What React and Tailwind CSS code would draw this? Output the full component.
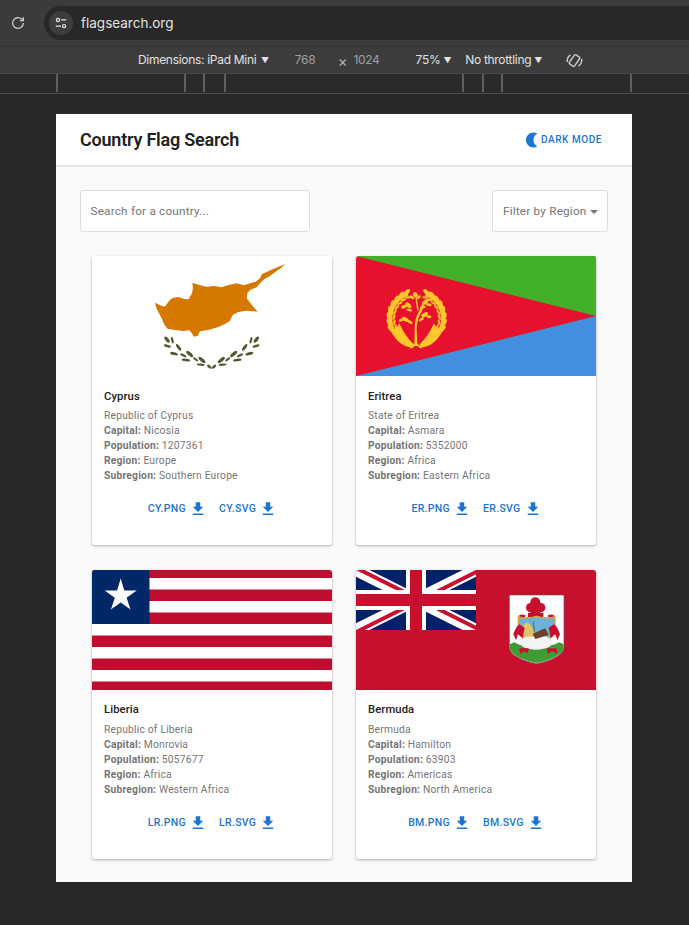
import React from "react";

const countries = [
  { name: "Cyprus", official: "Republic of Cyprus", capital: "Nicosia", population: "1207361", region: "Europe", subregion: "Southern Europe", code: "CY", Flag: CyprusFlag },
  { name: "Eritrea", official: "State of Eritrea", capital: "Asmara", population: "5352000", region: "Africa", subregion: "Eastern Africa", code: "ER", Flag: EritreaFlag },
  { name: "Liberia", official: "Republic of Liberia", capital: "Monrovia", population: "5057677", region: "Africa", subregion: "Western Africa", code: "LR", Flag: LiberiaFlag },
  { name: "Bermuda", official: "Bermuda", capital: "Hamilton", population: "63903", region: "Americas", subregion: "North America", code: "BM", Flag: BermudaFlag },
];

function CyprusLeaves() {
  const leaves = [
    [231, 269, 11, 5, 50], [247, 271, 10, 3.5, 78], [232, 288, 11, 4, 15], [266, 292, 12, 4.5, 55],
    [252, 311, 12, 4.5, 15], [299, 312, 13, 5, 40], [280, 316, 10, 3.5, 30], [288, 330, 13, 4, 8],
    [336, 330, 13, 5, 40], [317, 328, 9, 3.5, 35], [332, 344, 12, 3.5, 5], [358, 350, 8, 4, 40],
  ];
  return (
    <g fill="#4e5b31">
      {leaves.map(([cx, cy, rx, ry, rot], i) => (
        <ellipse key={i} cx={cx} cy={cy} rx={rx} ry={ry} transform={`rotate(${rot} ${cx} ${cy})`} />
      ))}
    </g>
  );
}

function CyprusFlag() {
  return (
    <svg viewBox="6 18 720 360" className="block w-[240px] h-[120px]">
      <rect x="6" y="18" width="720" height="360" fill="#fff" />
      <path
        fill="#d57800"
        d="M586 42 L566 50 L548 58 L530 66 L516 72 L510 85 L497 95 L480 100 L462 106 L440 100 L418 104 L395 112 L372 108 L350 110 L328 105 L307 98 L309 112 L306 130 L296 148 L282 147 L265 141 L250 143 L240 149 L232 160 L224 170 L210 166 L195 158 L198 172 L206 188 L215 205 L222 222 L232 236 L255 240 L280 243 L298 241 L306 250 L311 260 L323 258 L330 244 L355 240 L385 231 L405 222 L420 212 L428 195 L445 186 L470 182 L503 185 L488 168 L470 145 L472 130 L480 120 L500 112 L510 100 L522 88 L540 78 L556 66 L572 55 Z"
      />
      <CyprusLeaves />
      <g transform="translate(730 0) scale(-1 1)">
        <CyprusLeaves />
      </g>
    </svg>
  );
}

// left half of the wreath, t is the angle from the top of the ring
function wreathLeaves() {
  const out = [];
  for (let t = 22; t <= 125; t += 13) {
    const rad = (t * Math.PI) / 180;
    out.push({
      x: 110 - 83 * Math.sin(rad),
      y: 115 - 83 * Math.cos(rad),
      ix: 110 - 68 * Math.sin(rad),
      iy: 115 - 68 * Math.cos(rad),
      r: 160 - t,
      ri: 200 - t,
    });
  }
  return out;
}

function EritreaEmblem() {
  const sprigs = [
    [106, 44, 8, 7, 60], [96, 52, 8, 4, 40], [116, 52, 8, 4, -40],
    [85, 76, 11, 6, 40], [72, 80, 9, 5, -20], [88, 90, 9, 4, 10],
    [136, 66, 11, 6, -40], [146, 74, 9, 4, 10], [128, 82, 9, 4, -10],
    [76, 118, 11, 6, 30], [64, 120, 8, 4, -20], [90, 126, 9, 4, 30],
    [134, 104, 11, 6, -30], [146, 110, 8, 4, 10], [124, 118, 9, 4, -30],
  ];
  return (
    <g fill="#ffc72c">
      <path d="M32 152 Q56 200 100 203 L100 192 Q76 170 58 130 Q50 148 32 152Z" />
      <path d="M188 152 Q164 200 120 203 L120 192 Q144 170 162 130 Q170 148 188 152Z" />
      <path d="M51 164 A76 76 0 0 1 84 44" fill="none" stroke="#ffc72c" strokeWidth="7" />
      <path d="M169 164 A76 76 0 0 0 136 44" fill="none" stroke="#ffc72c" strokeWidth="7" />
      {wreathLeaves().map(({ x, y, ix, iy, r, ri }, i) => (
        <g key={i}>
          <ellipse cx={x} cy={y} rx="14" ry="6" transform={`rotate(${r} ${x} ${y})`} />
          <ellipse cx={220 - x} cy={y} rx="14" ry="6" transform={`rotate(${-r} ${220 - x} ${y})`} />
          <ellipse cx={ix} cy={iy} rx="9" ry="3.5" transform={`rotate(${ri} ${ix} ${iy})`} />
          <ellipse cx={220 - ix} cy={iy} rx="9" ry="3.5" transform={`rotate(${-ri} ${220 - ix} ${iy})`} />
        </g>
      ))}
      <path d="M103 198 L104 150 Q104 118 114 100 Q126 82 128 64 L132 64 Q132 86 120 104 Q110 122 110 150 L112 198Z" />
      <path d="M106 52 L110 52 L116 90 L112 94Z" />
      <path d="M88 205 L107 186 L128 205 L120 205 L108 194 L96 205Z" />
      {sprigs.map(([x, y, rx, ry, r], i) => (
        <ellipse key={i} cx={x} cy={y} rx={rx} ry={ry} transform={`rotate(${r} ${x} ${y})`} />
      ))}
    </g>
  );
}

function EritreaFlag() {
  return (
    <svg viewBox="0 0 240 120" className="block w-[240px] h-[120px]">
      <rect width="240" height="120" fill="#e8112d" />
      <polygon points="0,0 240,0 240,60" fill="#43b02a" />
      <polygon points="0,120 240,120 240,60" fill="#418fde" />
      <g transform="translate(24 24) scale(0.3333)">
        <EritreaEmblem />
      </g>
    </svg>
  );
}

function LiberiaFlag() {
  const h = 11.5;
  return (
    <svg viewBox="0 0 240 120" className="block w-[240px] h-[120px]">
      <rect width="240" height="120" fill="#fff" />
      {[0, 2, 4, 6, 8, 10].map((i) => (
        <rect key={i} y={i * h - 3.5} width="240" height={h} fill="#bf0d2f" />
      ))}
      <rect width="57.5" height="54" fill="#002868" />
      <polygon
        fill="#fff"
        points="28.7,8.5 32.3,20.5 44.7,20.5 34.6,27.8 38.5,39.5 28.7,32.4 18.9,39.5 22.8,27.8 12.7,20.5 25.1,20.5"
      />
    </svg>
  );
}

function BermudaFlag() {
  return (
    <svg viewBox="0 0 240 120" className="block w-[240px] h-[120px]">
      <rect width="240" height="120" fill="#c8102e" />
      <svg x="0" y="0" width="120" height="60" viewBox="0 0 60 30">
        <rect width="60" height="30" fill="#012169" />
        <path d="M0 0L60 30M60 0L0 30" stroke="#fff" strokeWidth="6" />
        <path d="M0 0L30 15M60 30L30 15" stroke="#c8102e" strokeWidth="2" transform="translate(0.9 -0.6)" />
        <path d="M60 0L30 15M0 30L30 15" stroke="#c8102e" strokeWidth="2" transform="translate(0.9 0.6)" />
        <path d="M30 0V30M0 15H60" stroke="#fff" strokeWidth="10" />
        <path d="M30 0V30M0 15H60" stroke="#c8102e" strokeWidth="6" />
      </svg>
      <g transform="translate(144 15) scale(0.3333)">
        <path d="M28 30H192V185Q192 218 110 236Q28 218 28 185Z" fill="#fff" stroke="#555" strokeWidth="2" />
        <path d="M29 178L42 172L60 180L80 175H140L160 180L178 172L191 178V186Q190 216 110 234Q30 216 29 186Z" fill="#3f9c35" />
        <g fill="#c8102e">
          <circle cx="106" cy="52" r="15" />
          <circle cx="92" cy="68" r="14" />
          <circle cx="122" cy="68" r="14" />
          <circle cx="106" cy="78" r="16" />
          <rect x="84" y="84" width="46" height="12" />
          <path d="M55 94Q62 84 78 92L70 100Z" />
          <path d="M165 94Q158 84 142 92L150 100Z" />
        </g>
        <path d="M55 96Q80 102 110 94Q140 102 165 96V130Q150 150 150 170L110 185L70 170Q70 150 55 130Z" fill="#6db3d8" stroke="#d9a62e" strokeWidth="4" />
        <path d="M68 164Q58 122 82 112Q102 120 102 160Z" fill="#e0c468" />
        <path d="M100 110L103 140" stroke="#66605a" strokeWidth="3" />
        <path d="M60 174Q68 150 98 156Q135 146 156 165Q166 190 110 194Q64 192 60 174Z" fill="#f3f3f3" />
        <path d="M98 146L136 130L146 150L106 162Z" fill="#6b4128" />
        <path d="M40 148Q46 128 58 118L74 128L68 160L54 148L48 166Z" fill="#c8102e" />
        <path d="M180 148Q174 128 162 118L146 128L152 160L166 148L172 166Z" fill="#c8102e" />
        <path d="M58 190H86L84 205L72 199L60 206Z" fill="#c8102e" />
        <path d="M140 190H170L172 206L156 199L144 206Z" fill="#c8102e" />
      </g>
    </svg>
  );
}

function DownloadIcon() {
  return (
    <svg viewBox="0 0 24 24" fill="currentColor" className="w-[18px] h-[18px] ml-[3px] mr-[-3px]">
      <path d="M19 9h-4V3H9v6H5l7 7 7-7zM5 18v2h14v-2H5z" />
    </svg>
  );
}

function Fact({ label, value }) {
  return (
    <p>
      <b className="font-bold">{label}:</b> {value}
    </p>
  );
}

function CountryCard({ c }) {
  const { Flag } = c;
  return (
    <div className="bg-white rounded-[3px] overflow-hidden h-[289px] shadow-[0_1px_3px_rgba(0,0,0,0.3)]">
      <Flag />
      <div className="px-3 pt-[12.5px]">
        <h2 className="text-[11.25px] leading-[16px] font-medium tracking-[0.1px] text-[#212121]">{c.name}</h2>
        <div className="mt-[3.5px] text-[10.25px] leading-[15px] tracking-[0.22px] text-[#757575]">
          <p>{c.official}</p>
          <Fact label="Capital" value={c.capital} />
          <Fact label="Population" value={c.population} />
          <Fact label="Region" value={c.region} />
          <Fact label="Subregion" value={c.subregion} />
        </div>
        <div className="mt-[17px] pr-[2px] flex justify-center gap-[15px] text-[#1976d2] text-[10.5px] font-medium tracking-[0.3px]">
          <span className="flex items-center h-[18px]">{c.code}.PNG<DownloadIcon /></span>
          <span className="flex items-center h-[18px]">{c.code}.SVG<DownloadIcon /></span>
        </div>
      </div>
    </div>
  );
}

function BrowserChrome() {
  return (
    <div className="text-[#e3e3e3] font-['Inter','Liberation_Sans',sans-serif]">
      <div className="h-[47px] bg-[#3b3b3b] pt-[6px] border-b border-[#333]">
        <div className="flex items-center h-[34px]">
          <svg viewBox="0 0 24 24" fill="none" stroke="#c8c8c8" strokeWidth="2" className="w-[16px] h-[16px] ml-[10px]">
            <path d="M20 12a8 8 0 1 1-2.6-5.9L20 8.5M20 3.5v5h-5" />
          </svg>
          <div className="ml-[18px] flex-1 h-[34px] rounded-l-full bg-[#282828] flex items-center pl-[5px]">
            <span className="w-[24px] h-[24px] rounded-full bg-[#3d3d3d] flex items-center justify-center">
              <svg viewBox="0 0 16 16" fill="none" stroke="#e3e3e3" strokeWidth="1.4" className="w-[14px] h-[14px]">
                <circle cx="4.5" cy="4.5" r="1.8" />
                <path d="M8 4.5h6M2 11.5h6" />
                <circle cx="11.5" cy="11.5" r="1.8" />
              </svg>
            </span>
            <span className="ml-[8px] text-[13.5px]">flagsearch.org</span>
          </div>
        </div>
      </div>
      <div className="h-[27px] bg-[#3c3c3c] border-b border-[#4a4a4a] flex items-center text-[12px] tracking-[-0.3px] whitespace-nowrap">
        <span className="ml-[138px] w-[122px]">Dimensions: iPad Mini</span>
        <span className="text-[8px] ml-[1px]">▼</span>
        <span className="ml-[26px] w-[20px] text-[#a0a0a0]">768</span>
        <span className="ml-[23px] text-[15px] leading-none mt-[2px] text-[#b0b0b0]">×</span>
        <span className="ml-[6px] text-[#a0a0a0]">1024</span>
        <span className="ml-[36px]">75%</span>
        <span className="text-[8px] ml-[3px]">▼</span>
        <span className="ml-[14px]">No throttling</span>
        <span className="text-[8px] ml-[3px]">▼</span>
        <svg viewBox="0 0 24 24" fill="none" stroke="#c8c8c8" strokeWidth="1.8" className="w-[19px] h-[19px] ml-[23px]">
          <rect x="8" y="5" width="8" height="14" rx="1.5" transform="rotate(35 12 12)" />
          <path d="M3 14a9 9 0 0 1 4-9M21 10a9 9 0 0 1-4 9" />
        </svg>
      </div>
      <div className="h-[20px] bg-[#292a2c] border-b border-[#4a4a4a] flex">
        <i className="w-[2px] h-[18px] bg-[#606060] ml-[56px]" />
        <i className="w-[2px] h-[18px] bg-[#606060] ml-[126px]" />
        <i className="w-[2px] h-[18px] bg-[#606060] ml-[17px]" />
        <i className="w-[2px] h-[18px] bg-[#606060] ml-[19px]" />
        <i className="w-[2px] h-[18px] bg-[#606060] ml-[236px]" />
        <i className="w-[2px] h-[18px] bg-[#606060] ml-[18px]" />
        <i className="w-[2px] h-[18px] bg-[#606060] ml-[17px]" />
        <i className="w-[2px] h-[18px] bg-[#606060] ml-[127px]" />
      </div>
    </div>
  );
}

export default function App() {
  return (
    <div className="h-[925px] w-[689px] bg-[#282828] overflow-hidden">
      <BrowserChrome />
      <div className="ml-[56px] mt-[20px] w-[576px] h-[768px] bg-[#fafafa] font-['Roboto',sans-serif]">
        <header className="h-[53px] bg-white border-b-2 border-[#e2e2e2] flex items-center justify-between pl-[24px] pr-[30px]">
          <h1 className="text-[18px] font-semibold text-[#212121] tracking-[-0.22px]">Country Flag Search</h1>
          <button className="flex items-center text-[#1976d2] text-[10px] font-medium tracking-[0.55px]">
            <svg viewBox="0 0 24 24" fill="currentColor" className="w-[18px] h-[18px] -scale-x-100">
              <path d="M10 2c-1.82 0-3.53.5-5 1.35C7.99 5.08 10 8.3 10 12s-2.01 6.92-5 8.65C6.47 21.5 8.18 22 10 22c5.52 0 10-4.48 10-10S15.52 2 10 2z" />
            </svg>
            DARK MODE
          </button>
        </header>
        <div className="mt-[23px] px-[24px] flex justify-between">
          <div className="w-[230px] h-[42px] bg-white border border-[#dcdcdc] rounded-[3px] flex items-center pl-[9.5px] pt-[1px] text-[11.75px] text-[#757575] tracking-[0.2px]">
            Search for a country...
          </div>
          <div className="w-[116px] h-[42px] bg-white border border-[#dcdcdc] rounded-[3px] flex items-center pl-[10px] pt-[1px] text-[11.75px] text-[#757575] tracking-[0.2px] whitespace-nowrap">
            Filter by Region
            <span className="ml-[3px] w-0 h-0 border-x-[4px] border-x-transparent border-t-[4px] border-t-[#757575]" />
          </div>
        </div>
        <div className="mt-[24px] mx-[36px] grid grid-cols-[240px_240px] gap-x-[24px] gap-y-[24.5px]">
          {countries.map((c) => (
            <CountryCard key={c.code} c={c} />
          ))}
        </div>
      </div>
    </div>
  );
}
